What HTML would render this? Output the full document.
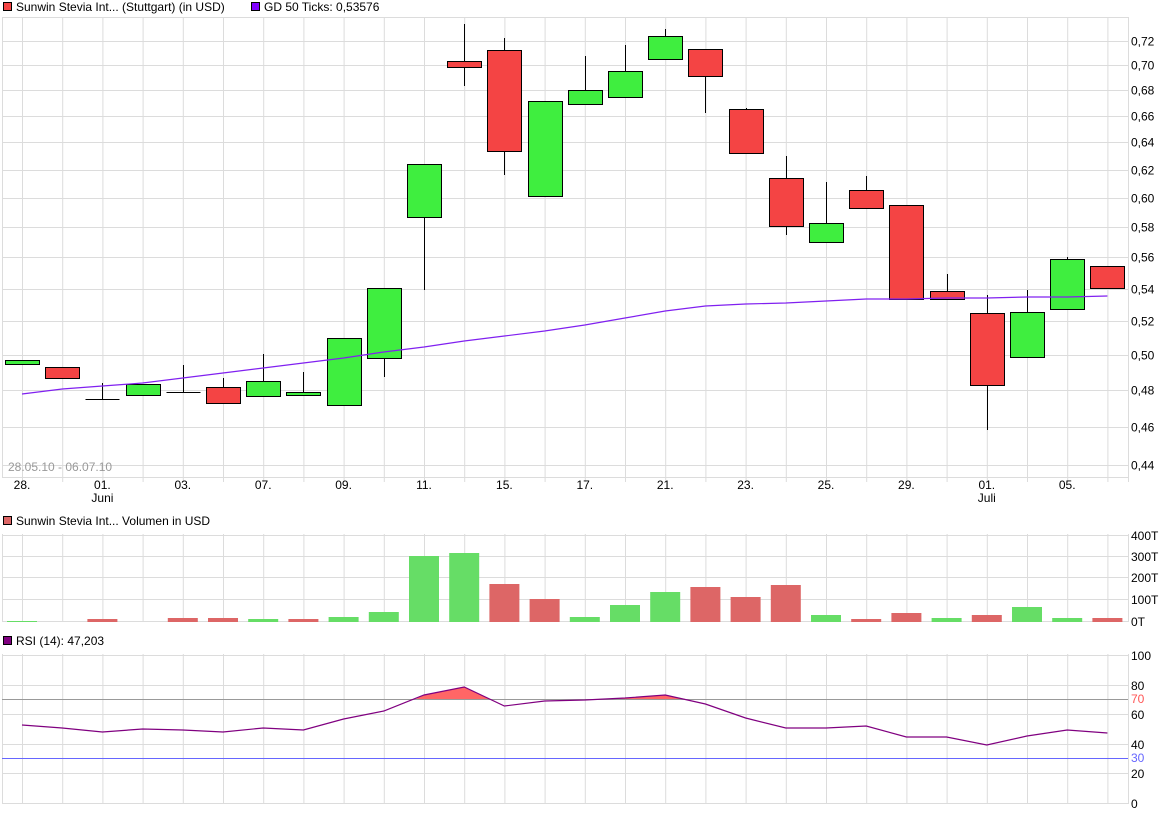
<!DOCTYPE html>
<html><head><meta charset="utf-8"><style>
html,body{margin:0;padding:0;background:#fff;width:1175px;height:815px;overflow:hidden}
svg{display:block;font-family:"Liberation Sans",sans-serif;font-size:12px}
</style></head><body>
<svg id="s" width="1175" height="815" xmlns="http://www.w3.org/2000/svg"></svg>
<script>
const s=document.getElementById('s');let h='';
const X=i=>22+40.2*i;
function ln(x1,y1,x2,y2,c,w){h+=`<line x1="${x1}" y1="${y1}" x2="${x2}" y2="${y2}" stroke="${c}" stroke-width="${w||1}"/>`;}
function tx(x,y,t,a,c){h+=`<text x="${x}" y="${y}" fill="${c||'#000'}" ${a?'text-anchor="'+a+'"':''}>${t}</text>`;}
const G='#dcdcdc';
const py=p=>41+861*(Math.log(0.72)-Math.log(p));
for(let i=0;i<28;i++)ln(X(i)+.5,18,X(i)+.5,482,G);
const pl=[.72,.70,.68,.66,.64,.62,.60,.58,.56,.54,.52,.50,.48,.46,.44];
ln(2,17.5,1128,17.5,G);
pl.forEach(p=>{const y=Math.round(py(p))+.5;ln(2,y,1128,y,G);tx(1131,y+4,p.toFixed(2).replace('.',','));});
ln(2,477.5,1128,477.5,G);ln(1128.5,17,1128.5,482,G);ln(2.5,17,2.5,477,G);
const C=[[360,364,360,364,'g'],[367,378,367,378,'r'],[399,399,383,400,'k'],[384,395,384,395,'g'],[392,392,365,393,'k'],[387,403,378,403,'r'],[381,396,354,396,'g'],[392,392,372,393,'g'],[338,405,338,405,'g'],[288,358,288,377,'g'],[164,217,164,290,'g'],[61,67,24,86,'r'],[50,151,38,175,'r'],[101,196,101,196,'g'],[90,104,56,104,'g'],[71,97,45,97,'g'],[36,59,29,59,'g'],[49,76,49,113,'r'],[109,153,108,153,'r'],[178,226,156,235,'r'],[223,242,182,242,'g'],[190,208,176,208,'r'],[205,299,205,299,'r'],[291,299,274,299,'r'],[313,385,295,430,'r'],[312,357,290,357,'g'],[259,309,257,309,'g'],[266,288,266,288,'r']];
C.forEach((c,i)=>{const x=Math.round(X(i))+.5;ln(x,c[2],x,c[3],'#000');
 if(c[4]=='k'){ln(x-17,c[0]+.5,x+17,c[0]+.5,'#000');}
 else h+=`<rect x="${x-17}" y="${c[0]+.5}" width="34" height="${Math.max(c[1]-c[0],3)}" fill="${c[4]=='g'?'#3fee3f':'#f44444'}" stroke="#000"/>`;});
const MA=[394,389,386,383,378,373,368,363,358,352,347,341,336,331,325,318,311,306,304,303,301,299,299,298,298,297,297,296];
h+=`<polyline fill="none" stroke="#8020f0" stroke-width="1.2" points="${MA.map((y,i)=>X(i)+','+y).join(' ')}"/>`;
tx(8,471,'28.05.10 - 06.07.10',null,'#999');
const L={0:'28.',2:'01.',4:'03.',6:'07.',8:'09.',10:'11.',12:'15.',14:'17.',16:'21.',18:'23.',20:'25.',22:'29.',24:'01.',26:'05.'};
for(const k in L)tx(X(k),489,L[k],'middle');
tx(X(2),502,'Juni','middle');tx(X(24),502,'Juli','middle');
h+=`<rect x="3.5" y="2.5" width="8" height="8" fill="#f44444" stroke="#000"/>`;tx(16,11,'Sunwin Stevia Int... (Stuttgart) (in USD)');
h+=`<rect x="251.5" y="2.5" width="8" height="8" fill="#8000ff" stroke="#000"/>`;tx(264,11,'GD 50 Ticks: 0,53576');
h+=`<rect x="3.5" y="516.5" width="8" height="8" fill="#dd6666" stroke="#000"/>`;tx(16,525,'Sunwin Stevia Int... Volumen in USD');
h+=`<rect x="3.5" y="636.5" width="8" height="8" fill="#800080" stroke="#000"/>`;tx(16,645,'RSI (14): 47,203');
for(let i=0;i<28;i++)ln(X(i)+.5,534,X(i)+.5,622,G);
[[535,'400T'],[556,'300T'],[577,'200T'],[599,'100T'],[621,'0T']].forEach(([y,t])=>{ln(2,y+.5,1128,y+.5,G);tx(1131,y+5,t);});
ln(1128.5,534,1128.5,622,G);ln(2.5,534,2.5,622,G);
const V=[621,621,619,622,618,618,619,619,617,612,556,553,584,599,617,605,592,587,597,585,615,619,613,618,615,607,618,618];
const VC='gxrgrrgrggggrrgggrrrgrrgrggr';
V.forEach((y,i)=>{if(VC[i]=='x')return;const g=VC[i]=='g';h+=`<rect x="${X(i)-15}" y="${y}" width="30" height="${622-y}" fill="${g?'#66dd66':'#dd6666'}"/>`;});
for(let i=0;i<28;i++)ln(X(i)+.5,654,X(i)+.5,803,G);
[[655,'100'],[685,'80'],[714,'60'],[744,'40'],[773,'20'],[803,'0']].forEach(([y,t])=>{ln(2,y+.5,1128,y+.5,G);tx(1131,y+5,t);});
ln(1128.5,654,1128.5,804,G);ln(2.5,654,2.5,804,G);
const R=[725,728,732,729,730,732,728,730,719,711,695,687,706,701,700,698,695,704,718,728,728,726,737,737,745,736,730,733];
h+=`<polygon fill="#ff6666" points="416,699 ${X(10)},695 ${X(11)},687 ${X(11)+26},699"/>`;
h+=`<polygon fill="#ff6666" points="${X(14)},699.5 ${X(15)},698 ${X(16)},695 ${X(16)+20},699"/>`;
ln(2,699.5,1128,699.5,'#999');tx(1131,703,'70',null,'#ff5555');
ln(2,758.5,1128,758.5,'#6666ff');tx(1131,762,'30',null,'#6666ff');
h+=`<polyline fill="none" stroke="#800080" stroke-width="1.2" points="${R.map((y,i)=>X(i)+','+y).join(' ')}"/>`;
s.innerHTML=h;
</script>
</body></html>
